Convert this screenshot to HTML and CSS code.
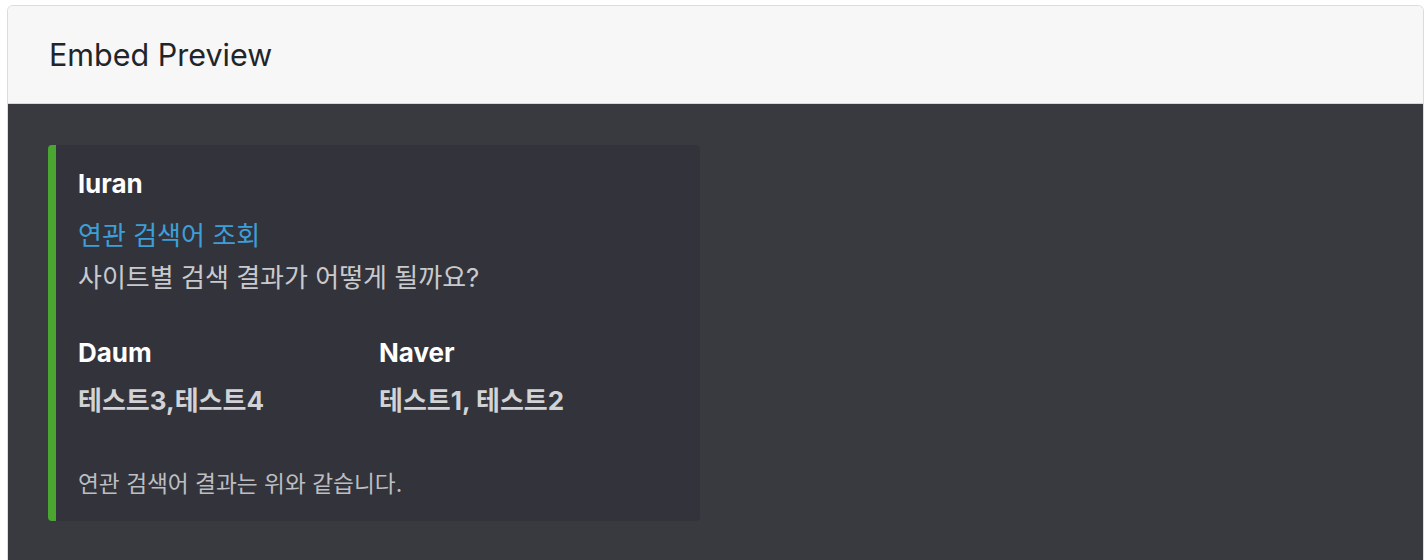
FILE: index.html
```html
<!DOCTYPE html>
<html lang="ko">
<head>
<meta charset="utf-8">
<title>Embed Preview</title>
<link rel="stylesheet" href="styles.css">
</head>
<body>
<div class="card">
  <div class="card-header">Embed Preview</div>
  <div class="card-body">
    <div class="embed">
      <div class="embed-author">luran</div>
      <a class="embed-title" href="#">연관 검색어 조회</a>
      <div class="embed-desc">사이트별 검색 결과가 어떻게 될까요?</div>
      <div class="embed-fields">
        <div class="field">
          <div class="field-name">Daum</div>
          <div class="field-value">테스트3,테스트4</div>
        </div>
        <div class="field">
          <div class="field-name">Naver</div>
          <div class="field-value">테스트1, 테스트2</div>
        </div>
      </div>
      <div class="embed-footer">연관 검색어 결과는 위와 같습니다.</div>
    </div>
  </div>
</div>
</body>
</html>
```
FILE: styles.css
```css
* { box-sizing: border-box; }
html, body { margin: 0; padding: 0; background: #ffffff; }
html { overflow: hidden; }
body {
  font-family: Inter, "Noto Sans CJK KR", sans-serif;
  padding: 5px 2px 0 7px;
  height: 560px;
  overflow: hidden;
}
.card {
  border: 1px solid #dcdcdf;
  border-bottom: none;
  border-radius: 6px 6px 0 0;
  overflow: hidden;
  height: 100%;
  display: flex;
  flex-direction: column;
}
.card-header {
  height: 98px;
  flex: none;
  background: #f7f7f8;
  border-bottom: 1px solid #d8d8da;
  padding: 0 41px;
  display: flex;
  align-items: center;
  font-size: 30.5px;
  color: #212529;
}
.card-body {
  flex: 1;
  background: #393a40;
  padding: 41px 40px 0;
}
.embed {
  width: 652px;
  background: #33343b;
  border-left: 8px solid #4aa630;
  border-radius: 4px;
  padding: 21px 22px 22px 22px;
  display: flex;
  flex-direction: column;
}
.embed-author {
  font-size: 26px;
  font-weight: 700;
  line-height: 36px;
  color: #ffffff;
}
.embed-title {
  margin-top: 13px;
  font-size: 26px;
  line-height: 42px;
  color: #3c9fd8;
  text-decoration: none;
}
.embed-desc {
  font-size: 26px;
  line-height: 42px;
  color: #c9cacd;
}
.embed-fields {
  margin-top: 36px;
  display: grid;
  grid-template-columns: 301px 301px;
}
.field-name {
  font-size: 26px;
  font-weight: 700;
  line-height: 36px;
  color: #ffffff;
}
.field-value {
  margin-top: 12px;
  font-size: 26px;
  font-weight: 700;
  line-height: 36px;
  color: #d2d3d6;
}
.embed-footer {
  margin-top: 50px;
  font-size: 22.7px;
  line-height: 30px;
  color: #bcbec1;
}
```
